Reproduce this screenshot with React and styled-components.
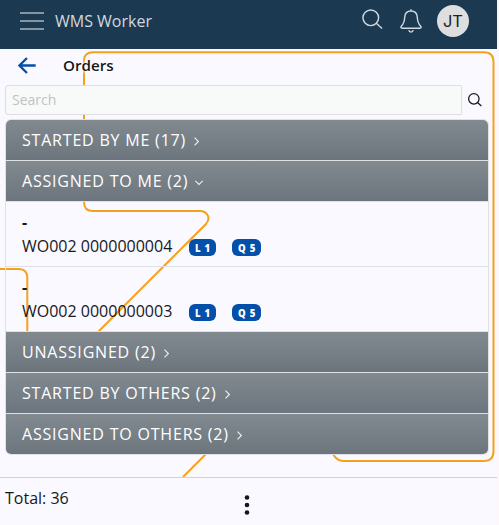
import React from "react";
import styled, { createGlobalStyle } from "styled-components";

const GlobalStyle = createGlobalStyle`
  * { box-sizing: border-box; }
  html, body { margin: 0; background: #fdf6fa; }
  body { font-family: "Open Sans", "Noto Sans", sans-serif; color: #16181b; overflow: hidden; }
  button { border: 0; padding: 0; background: none; font: inherit; color: inherit; display: flex; }
`;

const Screen = styled.div`
  position: relative;
  isolation: isolate;
  width: 497px;
  height: 525px;
  display: flex;
  flex-direction: column;
  background: #faf9ff;
`;

const Backdrop = styled.svg`
  position: absolute;
  inset: 0;
  z-index: -1;
`;

const AppBar = styled.header`
  height: 49px;
  flex: none;
  display: flex;
  align-items: flex-start;
  background: #1b3a52;
  padding: 5px 28px 0 20px;
  color: #d2d8dd;
`;

const MenuButton = styled.button`
  margin-top: 7px;
`;

const AppTitle = styled.div`
  flex: 1;
  margin: 5px 0 0 11px;
  font-size: 16px;
  line-height: 22px;
`;

const BarIcon = styled.button`
  margin: ${(p) => p.$margin};
`;

const Avatar = styled.div`
  width: 32px;
  height: 32px;
  border-radius: 50%;
  background: #dedede;
  color: #222;
  font: 16.5px/33px Inter, sans-serif;
  text-align: center;
`;

const PageHead = styled.div`
  height: 36px;
  flex: none;
  display: flex;
  align-items: center;
  padding: 0 0 3px 18px;
`;

const PageTitle = styled.h1`
  margin: -1px 0 0 27px;
  font-size: 15.2px;
  line-height: 20px;
  font-weight: 600;
  text-shadow: 0 0 3px #fff, 0 0 3px #fff, 0 0 5px #fff;
`;

const SearchRow = styled.div`
  display: flex;
  flex: none;
  height: 30px;
  padding-left: 5px;
`;

const SearchInput = styled.input`
  width: 457px;
  height: 30px;
  border: 1px solid #dddfe4;
  border-radius: 3px 0 0 3px;
  background: #f8faf9;
  padding: 0 6px 1px;
  outline: none;
  font: 14px "Open Sans", sans-serif;
  &::placeholder { color: #bfc2c3; opacity: 1; }
`;

const SearchButton = styled.button`
  width: 26px;
  align-items: center;
  justify-content: center;
`;

const Groups = styled.div`
  width: 484px;
  flex: none;
  margin: 4px 0 0 5px;
  border: 1px solid #dee2e6;
  border-radius: 6px;
  overflow: hidden;
`;

const GroupHead = styled.div`
  height: 41px;
  padding: 0 16px;
  display: flex;
  align-items: center;
  gap: 7px;
  background: linear-gradient(#828a90, #6c757d);
  background-clip: padding-box;
  border-bottom: 1px solid #dee2e6;
  color: #fff;
  font-size: 16px;
  letter-spacing: 0.8px;
  &:last-child { height: 40px; border-bottom: 0; }
  svg { margin-top: 3px; }
`;

const Order = styled.div`
  height: 65px;
  border-bottom: 1px solid #dee2e6;
  padding: 8px 16px 0;
  font-size: 16px;
  line-height: 24px;
`;

const Assignee = styled.div`
  font-weight: 700;
`;

const OrderLine = styled.div`
  display: flex;
  align-items: center;
`;

const OrderNumber = styled.span`
  width: 167px;
`;

const Badge = styled.span`
  height: 17px;
  width: ${(p) => p.$width}px;
  margin: 2px 16px 0 0;
  border-radius: 6px;
  background: #034fa9;
  color: #fff;
  text-align: center;
  font: 800 9.6px/19px "Open Sans", sans-serif;
  letter-spacing: 0.8px;
  padding-left: 1px;
`;

const Footer = styled.footer`
  margin-top: auto;
  height: 48px;
  border-top: 1px solid #cfd0d8;
  background: #faf9ff;
  padding: 9px 0 0 5px;
  display: grid;
  grid-template-columns: 239px 1fr;
`;

const Total = styled.div`
  font-size: 16px;
  line-height: 23px;
`;

const MoreButton = styled.button`
  margin-top: 8px;
`;

function SearchIcon({ size, stroke = 1.5 }) {
  return (
    <svg width={size} height={size} viewBox="0 0 22 22" fill="none" stroke="currentColor" strokeWidth={stroke}>
      <circle cx="9.2" cy="9.2" r="8.2" />
      <path d="M15 15 L21 20.5" />
    </svg>
  );
}

function Chevron({ open }) {
  return open ? (
    <svg width="8" height="9" viewBox="0 0 8 9" fill="none" stroke="#f1f2f3" strokeWidth="1.1"><path d="M.2 2.8 4 6.4 7.8 2.8" /></svg>
  ) : (
    <svg width="7" height="9" viewBox="0 0 7 9" fill="none" stroke="#f1f2f3" strokeWidth="1.1"><path d="M1.5 .7 5.4 4.5 1.5 8.3" /></svg>
  );
}

const groups = [
  { title: "STARTED BY ME (17)" },
  { title: "ASSIGNED TO ME (2)", orders: ["WO002 0000000004", "WO002 0000000003"] },
  { title: "UNASSIGNED (2)" },
  { title: "STARTED BY OTHERS (2)" },
  { title: "ASSIGNED TO OTHERS (2)" },
];

export default function App() {
  return (
    <>
      <GlobalStyle />
      <Screen>
        <Backdrop width="497" height="525" fill="none" stroke="#f6a11d" strokeWidth="2">
          <path d="M0 269H19Q27.3 269 27.3 278V332" />
          <path d="M183 477 L226 434 M98 332 L206 224 Q210 219 207.500 215 Q205 211 200 211 H93 Q84 211 84 202 V61 Q84 52.300 93 52.300 H484 Q493.500 52.300 493.500 62 V451 Q493.500 461 484 461 H343 Q337 461 333 454" />
        </Backdrop>
        <AppBar>
          <MenuButton aria-label="Menu">
            <svg width="24" height="19" viewBox="0 0 24 19" stroke="#a9b3bc" strokeWidth="1.5">
              <path d="M0 1H24M0 9H24M0 17H24" />
            </svg>
          </MenuButton>
          <AppTitle>WMS Worker</AppTitle>
          <BarIcon $margin="4px 17px 0 0" aria-label="Search"><SearchIcon size={21} stroke={1.5} /></BarIcon>
          <BarIcon $margin="4px 15px 0 0" aria-label="Notifications">
            <svg width="22" height="24" viewBox="0 0 22 24" fill="none" stroke="currentColor" strokeWidth="1.4" strokeLinejoin="round">
              <path d="M11 .3V2M11 2C7.200 2 4.900 4.500 4.700 8.300C4.500 13 4.100 14.300 1.500 17C.4 18.300 .8 19.200 2.200 19.200H19.800C21.200 19.200 21.600 18.300 20.500 17C17.900 14.300 17.500 13 17.300 8.300C17.100 4.500 14.800 2 11 2Z" />
              <path d="M8.800 21.200Q9.200 23.100 11 23.100Q12.800 23.100 13.200 21.200" />
            </svg>
          </BarIcon>
          <Avatar>JT</Avatar>
        </AppBar>
        <PageHead>
          <button aria-label="Back">
            <svg width="18" height="17" viewBox="0 0 18 17" fill="none" stroke="#034fa9" strokeWidth="2.3">
              <path d="M17.700 8.500H1.800M9 1 1.500 8.500 9 16" />
            </svg>
          </button>
          <PageTitle>Orders</PageTitle>
        </PageHead>
        <SearchRow>
          <SearchInput placeholder="Search" />
          <SearchButton aria-label="Search"><SearchIcon size={14} stroke={2} /></SearchButton>
        </SearchRow>
        <Groups>
          {groups.map((group) => (
            <React.Fragment key={group.title}>
              <GroupHead>{group.title}<Chevron open={!!group.orders} /></GroupHead>
              {group.orders?.map((number) => (
                <Order key={number}>
                  <Assignee>-</Assignee>
                  <OrderLine>
                    <OrderNumber>{number}</OrderNumber>
                    <Badge $width={27}>L 1</Badge>
                    <Badge $width={29}>Q 5</Badge>
                  </OrderLine>
                </Order>
              ))}
            </React.Fragment>
          ))}
        </Groups>
        <Footer>
          <Total>Total: 36</Total>
          <MoreButton aria-label="More">
            <svg width="6" height="20" fill="#16181b"><circle cx="3" cy="2.500" r="2.300" /><circle cx="3" cy="10" r="2.300" /><circle cx="3" cy="17.500" r="2.300" /></svg>
          </MoreButton>
        </Footer>
      </Screen>
    </>
  );
}
